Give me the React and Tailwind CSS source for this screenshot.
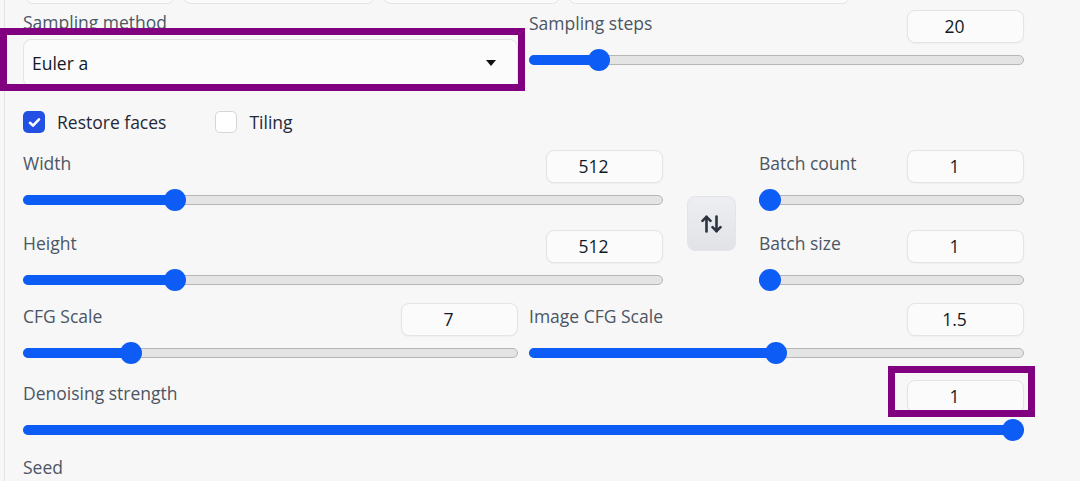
import React from 'react'

const Label = ({ children, className = '' }) => (
  <span className={`text-[17.5px] text-[#4b5563] leading-none ${className}`}>{children}</span>
)

const NumBox = ({ value }) => (
  <div className="w-[117px] h-[33px] shrink-0 rounded-lg border border-[#e3e4e8] bg-[#fbfbfb] flex items-center justify-center pr-[22px] text-[17.5px] text-[#111827] shadow-[0_1px_2px_rgba(0,0,0,0.04)]">
    {value}
  </div>
)

const Slider = ({ pct }) => (
  <div className="h-[34px] flex items-center">
    <div className="relative w-full h-[10px] rounded-full bg-[#e4e4e4] border border-[#b6b6b6]">
      <div
        className="absolute -left-px -top-px -bottom-px rounded-full bg-[#0d5cf6]"
        style={{ width: `calc(${pct}% + 1px)` }}
      />
      <div
        className="absolute top-1/2 w-[22px] h-[22px] -translate-x-1/2 -translate-y-1/2 rounded-full bg-[#0d5cf6]"
        style={{ left: `${pct}%` }}
      />
    </div>
  </div>
)

const SliderBlock = ({ label, value, pct }) => (
  <div className="flex flex-col">
    <div className="h-[33px] flex items-center justify-between">
      <Label className="mb-[6px]">{label}</Label>
      <NumBox value={value} />
    </div>
    <Slider pct={pct} />
  </div>
)

const Checkbox = ({ checked, label }) => (
  <div className="flex items-center gap-[12px]">
    {checked ? (
      <div className="w-[22px] h-[22px] rounded-[5px] bg-[#2150e2] flex items-center justify-center">
        <svg width="13" height="11" viewBox="0 0 13 11" fill="none">
          <polyline points="2,5.8 5,8.6 11,2.4" stroke="white" strokeWidth="2.6" strokeLinecap="round" strokeLinejoin="round" />
        </svg>
      </div>
    ) : (
      <div className="w-[22px] h-[22px] rounded-[5px] bg-white border border-[#d4d6db]" />
    )}
    <span className="text-[17.5px] text-[#1f2937] leading-none mt-[2px]">{label}</span>
  </div>
)

const SwapIcon = () => (
  <svg width="21" height="18" viewBox="0 0 21 18" fill="none" stroke="#2b3340" strokeWidth="2.6" strokeLinecap="round" strokeLinejoin="round">
    <path d="M5.5 16.5V1.8" />
    <path d="M1.5 5.8l4-4 4 4" />
    <path d="M15.5 1.5v14.7" />
    <path d="M11.5 12.2l4 4 4-4" />
  </svg>
)

export default function App() {
  return (
    <div className="relative w-[1080px] h-[481px] overflow-hidden bg-[#f7f7f7] font-['Open_Sans','Noto_Sans',sans-serif]">
      <div className="ml-[4px] h-full w-[1020px] border-l border-[#e2e3e6] pl-[18px]">
        {/* cut-off row above */}
        <div className="h-[4px] overflow-hidden flex items-end gap-[8px] pl-[2px]">
          <div className="w-[150px] h-[40px] shrink-0 rounded-lg border border-[#e3e4e8] bg-[#fbfbfb]" />
          <div className="w-[192px] h-[40px] shrink-0 rounded-lg border border-[#e3e4e8] bg-[#fbfbfb]" />
          <div className="w-[177px] h-[40px] shrink-0 rounded-lg border border-[#e3e4e8] bg-[#fbfbfb]" />
          <div className="w-[282px] h-[40px] shrink-0 rounded-lg border border-[#e3e4e8] bg-[#fbfbfb]" />
        </div>

        {/* sampling */}
        <div className="mt-[6px] grid grid-cols-2 gap-x-[11px]">
          <div className="flex flex-col">
            <div className="h-[29px] flex items-center">
              <Label className="mb-[4px]">Sampling method</Label>
            </div>
            <div className="h-[48px] rounded-lg border border-[#e3e4e8] bg-[#fbfbfb] flex items-center justify-between pl-[8px] pr-[21px]">
              <span className="text-[17.5px] text-[#111827]">Euler a</span>
              <div className="w-0 h-0 border-l-[5.5px] border-r-[5.5px] border-t-[6px] border-l-transparent border-r-transparent border-t-[#111]" />
            </div>
          </div>
          <SliderBlock label="Sampling steps" value="20" pct={13.9} />
        </div>

        {/* checkboxes */}
        <div className="mt-[24px] h-[22px] flex items-center gap-[49px]">
          <Checkbox checked label="Restore faces" />
          <Checkbox label="Tiling" />
        </div>

        {/* size / batch */}
        <div className="mt-[17px] flex items-center">
          <div className="w-[640px] flex flex-col gap-[13px]">
            <SliderBlock label="Width" value="512" pct={23.6} />
            <SliderBlock label="Height" value="512" pct={23.6} />
          </div>
          <button className="ml-[24px] w-[49px] h-[55px] rounded-lg bg-gradient-to-b from-[#eceef1] to-[#e1e3e7] border border-[#e3e5e9] flex items-center justify-center">
            <SwapIcon />
          </button>
          <div className="ml-[23px] w-[265px] flex flex-col gap-[13px]">
            <SliderBlock label="Batch count" value="1" pct={3.8} />
            <SliderBlock label="Batch size" value="1" pct={3.8} />
          </div>
        </div>

        {/* cfg */}
        <div className="mt-[6px] grid grid-cols-2 gap-x-[11px]">
          <SliderBlock label="CFG Scale" value="7" pct={21.8} />
          <SliderBlock label="Image CFG Scale" value="1.5" pct={49.9} />
        </div>

        {/* denoising */}
        <div className="mt-[10px]">
          <SliderBlock label="Denoising strength" value="1" pct={99} />
        </div>

        {/* seed */}
        <div className="mt-[9px]">
          <Label>Seed</Label>
        </div>
        <div className="mt-[10px] ml-[4px] h-[40px] w-[600px] rounded-lg border border-[#e3e4e8] bg-[#fbfbfb]" />
      </div>

      {/* annotation boxes */}
      <div className="absolute left-0 top-[28px] w-[525px] h-[63px] border-[7px] border-[#800080]" />
      <div className="absolute left-[888px] top-[366px] w-[147px] h-[51px] border-[7px] border-[#800080]" />
    </div>
  )
}
